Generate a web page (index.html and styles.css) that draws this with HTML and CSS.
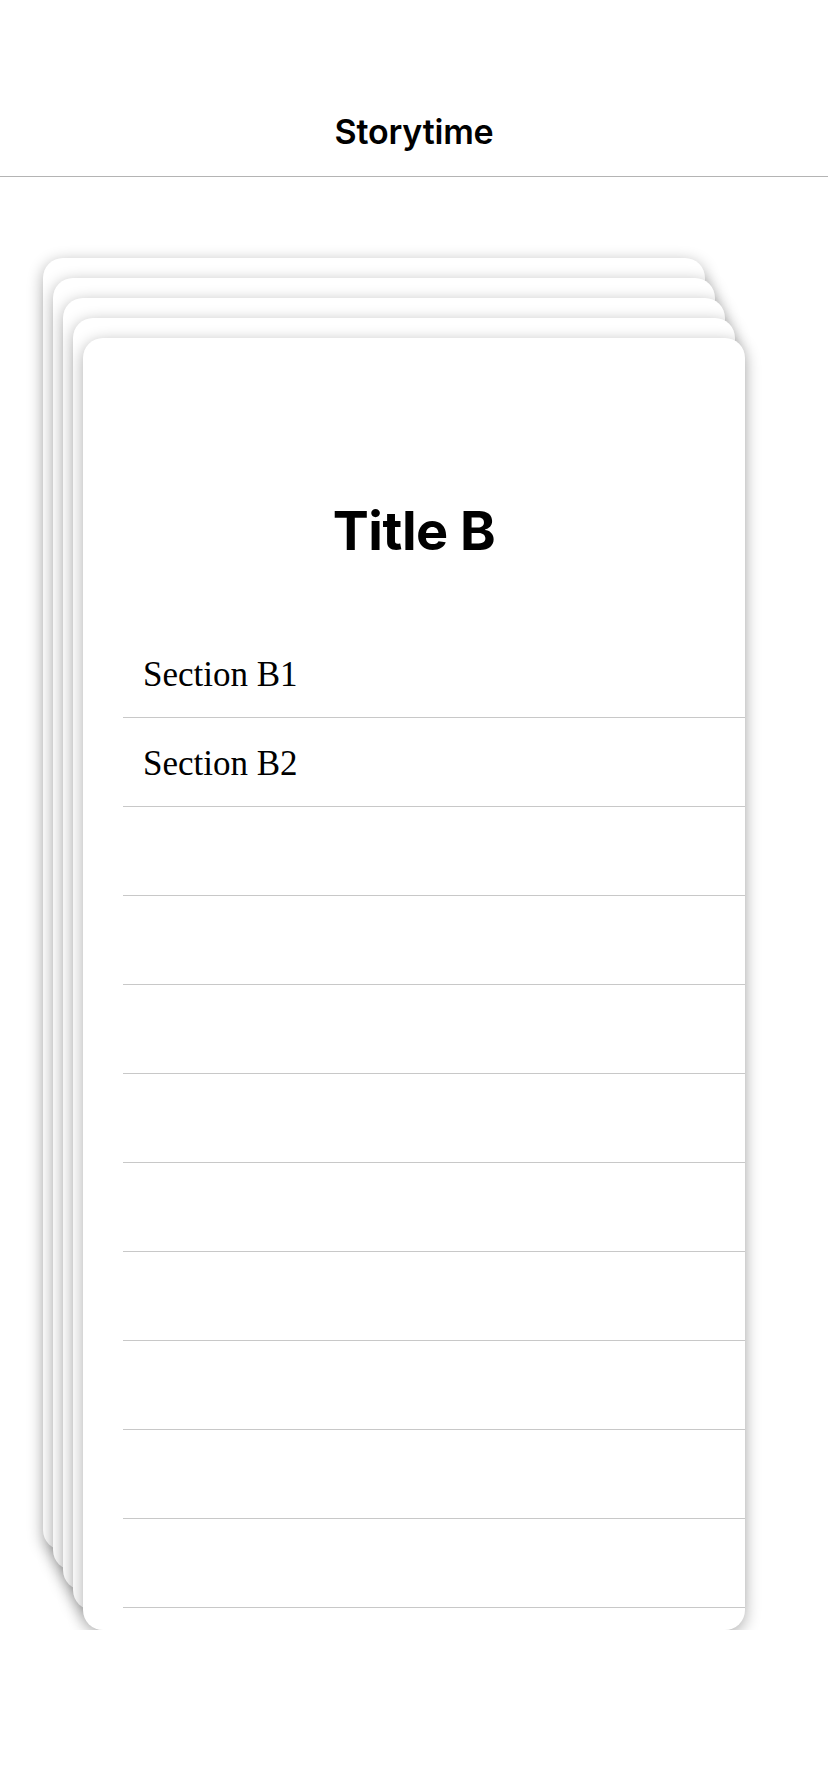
FILE: index.html
```html
<!DOCTYPE html>
<html lang="en">
<head>
<meta charset="utf-8">
<title>Storytime</title>
<link rel="stylesheet" href="styles.css">
</head>
<body>
<header class="navbar">
  <h1 class="nav-title">Storytime</h1>
</header>
<main class="stack">
  <div class="card card-1"></div>
  <div class="card card-2"></div>
  <div class="card card-3"></div>
  <div class="card card-4"></div>
  <section class="card card-5">
    <h2 class="card-title">Title B</h2>
    <ul class="rows">
      <li class="row">Section B1</li>
      <li class="row">Section B2</li>
      <li class="row"></li>
      <li class="row"></li>
      <li class="row"></li>
      <li class="row"></li>
      <li class="row"></li>
      <li class="row"></li>
      <li class="row"></li>
      <li class="row"></li>
      <li class="row"></li>
    </ul>
  </section>
</main>
</body>
</html>
```
FILE: styles.css
```css
* { box-sizing: border-box; }

html, body {
  margin: 0;
  padding: 0;
  background: #ffffff;
}

body {
  font-family: Inter, "Liberation Sans", sans-serif;
  color: #000;
}

.navbar {
  height: 177px;
  padding-top: 88px;
  border-bottom: 1px solid #b4b4b4;
  display: flex;
  align-items: center;
  justify-content: center;
}

.nav-title {
  margin: 0;
  font-size: 34px;
  font-weight: 600;
  line-height: 88px;
  letter-spacing: -0.2px;
}

.stack {
  display: grid;
  margin: 81px 0 0 43px;
  width: 702px;
}

.card {
  grid-area: 1 / 1;
  width: 662px;
  height: 1292px;
  background: #ffffff;
  border-radius: 20px;
  box-shadow: 0 4px 16px rgba(0, 0, 0, 0.33);
}

.card-1 { margin: 0 0 0 0; }
.card-2 { margin: 20px 0 0 10px; }
.card-3 { margin: 40px 0 0 20px; }
.card-4 { margin: 60px 0 0 30px; }
.card-5 { margin: 80px 0 0 40px; padding-top: 161px; }

.card-title {
  margin: 0;
  text-align: center;
  font-size: 54px;
  font-weight: 700;
  line-height: 64px;
  letter-spacing: -0.5px;
}

.rows {
  list-style: none;
  margin: 66px 0 0 40px;
  padding: 0;
}

.row {
  height: 89px;
  padding: 3px 0 0 20px;
  line-height: 85px;
  border-bottom: 1px solid #c8c8c8;
  font-family: "Liberation Serif", "DejaVu Serif", serif;
  font-size: 35px;
}
```
